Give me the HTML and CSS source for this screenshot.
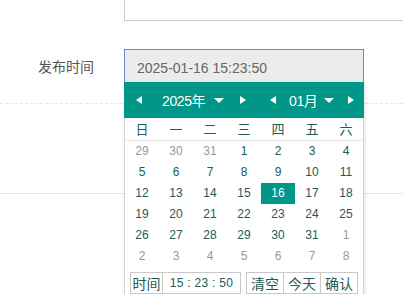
FILE: index.html
```html
<!DOCTYPE html>
<html lang="zh-CN">
<head>
  <meta charset="UTF-8" />
  <meta name="viewport" content="width=device-width, initial-scale=1.0"/>
  <title>发布时间</title>
  <link rel="stylesheet" href="styles.css">
</head>
<body>
  <div class="page">
    <div class="textarea-row">
      <div class="textarea"></div>
    </div>

    <div class="form-item">
      <label class="form-label">发布时间</label>
      <div class="input-wrap">
        <input class="date-input" type="text" value="2025-01-16 15:23:50" />

        <!-- 日期弹窗 -->
        <div class="laydate">
          <div class="ld-header">
            <i class="arr-l y-prev"></i>
            <span class="ld-year">2025年</span>
            <i class="caret c-year"></i>
            <i class="arr-r y-next"></i>
            <i class="arr-l m-prev"></i>
            <span class="ld-month">01月</span>
            <i class="caret c-month"></i>
            <i class="arr-r m-next"></i>
          </div>
          <div class="ld-body">
            <div class="ld-week">
              <span>日</span><span>一</span><span>二</span><span>三</span><span>四</span><span>五</span><span>六</span>
            </div>
            <div class="ld-days" id="days"></div>
            <div class="ld-footer">
              <span class="ft-box ft-label">时间</span>
              <span class="ft-box ft-time">15 : 23 : 50</span>
              <div class="ft-btns">
                <span class="ft-box">清空</span>
                <span class="ft-box">今天</span>
                <span class="ft-box">确认</span>
              </div>
            </div>
          </div>
        </div>
      </div>
    </div>

    <div class="form-rest"></div>
  </div>

  <script>
    const days = document.getElementById('days');
    const list = [];
    [29, 30, 31].forEach(d => list.push({ d, other: true }));
    for (let d = 1; d <= 31; d++) list.push({ d, other: false });
    for (let d = 1; d <= 8; d++) list.push({ d, other: true });

    list.forEach(item => {
      const cell = document.createElement('span');
      cell.textContent = item.d;
      if (item.other) cell.className = 'other';
      if (!item.other && item.d === 16) cell.className = 'active';
      days.appendChild(cell);
    });
  </script>
</body>
</html>
```

FILE: styles.css
```css
html, body {
  margin: 0;
  background-color: #fff;
}
body {
  font-family: 'Liberation Sans', 'Noto Sans CJK SC', sans-serif;
}
.page {
  width: 403px;
  min-height: 294px;
}
.textarea-row {
  padding-left: 124px;
}
.textarea {
  width: 279px;
  height: 20px;
  border-left: 1px solid #c9c9c9;
  border-bottom: 1px solid #c9c9c9;
}
.form-item {
  display: flex;
  margin-top: 28px;
  padding-bottom: 16px;
  border-bottom: 1px dashed #e6e6e6;
}
.form-label {
  width: 124px;
  box-sizing: border-box;
  padding-right: 30px;
  text-align: right;
  line-height: 36px;
  font-size: 14px;
  color: #555;
}
.input-wrap {
  position: relative;
}
.date-input {
  display: block;
  box-sizing: border-box;
  width: 240px;
  height: 38px;
  margin: 0;
  padding: 0 12px;
  border: 1px solid #7383d4;
  background-color: #ececec;
  font-family: 'Liberation Sans', sans-serif;
  font-size: 14px;
  color: #666;
  outline: none;
}
.form-rest {
  height: 89px;
  border-bottom: 1px solid #e6e6e6;
}

/* 日期弹窗 */
.laydate {
  position: absolute;
  top: 33px;
  left: 0;
  z-index: 10;
  width: 240px;
  background-color: #fff;
  box-shadow: 1px 1px 4px rgba(0, 0, 0, 0.12);
  color: #245a56;
}
.ld-header {
  display: flex;
  align-items: center;
  height: 36px;
  padding-left: 12px;
  background-color: #009688;
  color: #fff;
  font-size: 14px;
}
.arr-l {
  width: 0;
  height: 0;
  border-top: 4px solid transparent;
  border-bottom: 4px solid transparent;
  border-right: 6px solid #fff;
}
.arr-r {
  width: 0;
  height: 0;
  border-top: 4px solid transparent;
  border-bottom: 4px solid transparent;
  border-left: 6px solid #fff;
}
.caret {
  width: 0;
  height: 0;
  border-left: 5px solid transparent;
  border-right: 5px solid transparent;
  border-top: 5px solid #fff;
}
.ld-year {
  width: 44px;
  margin-left: 20px;
  letter-spacing: -0.4px;
}
.c-year {
  margin-left: 8px;
}
.y-next {
  margin-left: 16px;
}
.m-prev {
  margin-left: 24px;
}
.ld-month {
  width: 31px;
  margin-left: 13px;
  letter-spacing: -0.4px;
}
.c-month {
  margin-left: 4px;
}
.m-next {
  margin-left: 14px;
}
.ld-body {
  border-left: 1px solid #d2d2d2;
  border-right: 1px solid #d2d2d2;
}
.ld-week,
.ld-days {
  display: grid;
  grid-template-columns: repeat(7, 34px);
}
.ld-week {
  height: 22px;
  border-bottom: 1px solid #e2e2e2;
}
.ld-week span {
  line-height: 22px;
  text-align: center;
  font-size: 13px;
  font-family: 'Noto Sans CJK SC', sans-serif;
}
.ld-days span {
  height: 21px;
  line-height: 21px;
  text-align: center;
  font-size: 12px;
}
.ld-days .other {
  color: #999;
}
.ld-days .active {
  background-color: #009688;
  color: #fff;
}
.ld-footer {
  display: flex;
  padding: 5px;
}
.ft-box {
  box-sizing: border-box;
  height: 22px;
  line-height: 20px;
  padding: 0 5px;
  border: 1px solid #c9c9c9;
  font-size: 14px;
  font-family: 'Noto Sans CJK SC', sans-serif;
  text-align: center;
}
.ft-label {
  width: 33px;
  padding: 0;
}
.ft-time {
  width: 79px;
  margin-left: -1px;
  font-size: 12px;
  font-family: 'Liberation Sans', sans-serif;
  letter-spacing: 0.3px;
}
.ft-btns {
  display: flex;
  margin-left: 5px;
}
.ft-btns .ft-box {
  width: 38px;
  padding: 0;
}
.ft-btns .ft-box + .ft-box {
  margin-left: -1px;
}
```
